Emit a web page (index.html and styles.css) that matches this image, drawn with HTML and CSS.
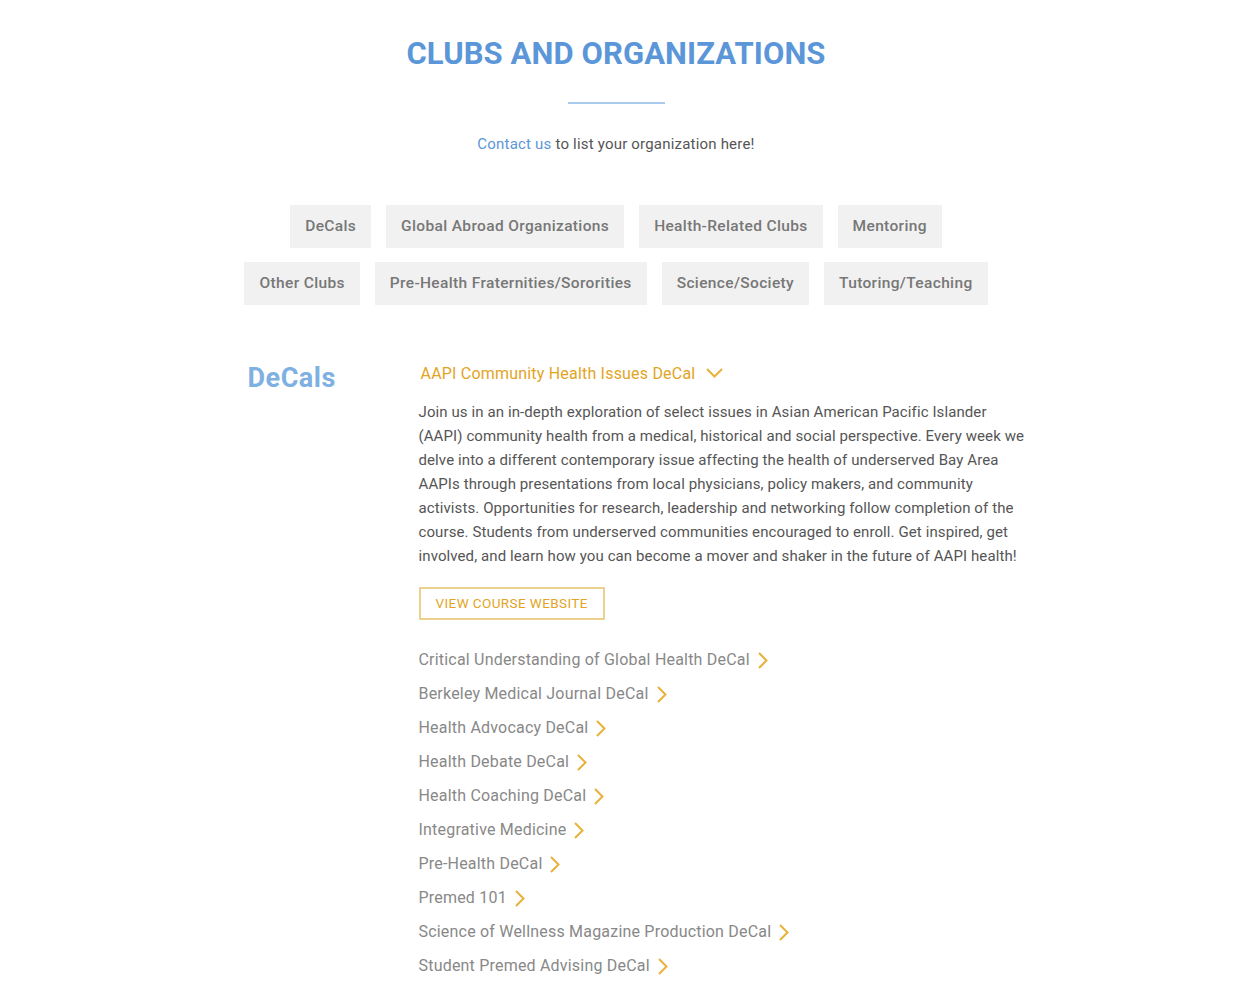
FILE: index.html
```html
<!DOCTYPE html>
<html>
<head>
<meta charset="utf-8">
<link rel="stylesheet" href="styles.css">
</head>
<body>
<div class="page">
  <header class="intro">
    <h1 class="title">CLUBS AND ORGANIZATIONS</h1>
    <div class="rule"></div>
    <p class="lead"><a class="lead-link" href="#">Contact us</a> to list your organization here!</p>
  </header>

  <nav class="filters">
    <div class="filter-row">
      <span class="filter">DeCals</span>
      <span class="filter">Global Abroad Organizations</span>
      <span class="filter">Health-Related Clubs</span>
      <span class="filter">Mentoring</span>
    </div>
    <div class="filter-row">
      <span class="filter">Other Clubs</span>
      <span class="filter">Pre-Health Fraternities/Sororities</span>
      <span class="filter">Science/Society</span>
      <span class="filter">Tutoring/Teaching</span>
    </div>
  </nav>

  <section class="group">
    <h2 class="group-title">DeCals</h2>
    <div class="group-body">
      <div class="item open">
        <div class="item-head">AAPI Community Health Issues DeCal
          <svg class="chev-down" width="17" height="10" viewBox="0 0 17 10"><path d="M1 1 L8.5 8.5 L16 1" fill="none" stroke="#e8b23a" stroke-width="2"/></svg>
        </div>
        <p class="item-text">Join us in an in-depth exploration of select issues in Asian American Pacific Islander (AAPI) community health from a medical, historical and social perspective. Every week we delve into a different contemporary issue affecting the health of underserved Bay Area AAPIs through presentations from local physicians, policy makers, and community activists. Opportunities for research, leadership and networking follow completion of the course. Students from underserved communities encouraged to enroll. Get inspired, get involved, and learn how you can become a mover and shaker in the future of AAPI health!</p>
        <a class="course-btn" href="#">VIEW COURSE WEBSITE</a>
      </div>
      <ul class="list">
        <li class="list-item">Critical Understanding of Global Health DeCal<svg class="chev" width="10" height="17" viewBox="0 0 10 17"><path d="M1 1 L8.5 8.5 L1 16" fill="none" stroke="#e8b23a" stroke-width="2"/></svg></li>
        <li class="list-item">Berkeley Medical Journal DeCal<svg class="chev" width="10" height="17" viewBox="0 0 10 17"><path d="M1 1 L8.5 8.5 L1 16" fill="none" stroke="#e8b23a" stroke-width="2"/></svg></li>
        <li class="list-item">Health Advocacy DeCal<svg class="chev" width="10" height="17" viewBox="0 0 10 17"><path d="M1 1 L8.5 8.5 L1 16" fill="none" stroke="#e8b23a" stroke-width="2"/></svg></li>
        <li class="list-item">Health Debate DeCal<svg class="chev" width="10" height="17" viewBox="0 0 10 17"><path d="M1 1 L8.5 8.5 L1 16" fill="none" stroke="#e8b23a" stroke-width="2"/></svg></li>
        <li class="list-item">Health Coaching DeCal<svg class="chev" width="10" height="17" viewBox="0 0 10 17"><path d="M1 1 L8.5 8.5 L1 16" fill="none" stroke="#e8b23a" stroke-width="2"/></svg></li>
        <li class="list-item">Integrative Medicine<svg class="chev" width="10" height="17" viewBox="0 0 10 17"><path d="M1 1 L8.5 8.5 L1 16" fill="none" stroke="#e8b23a" stroke-width="2"/></svg></li>
        <li class="list-item">Pre-Health DeCal<svg class="chev" width="10" height="17" viewBox="0 0 10 17"><path d="M1 1 L8.5 8.5 L1 16" fill="none" stroke="#e8b23a" stroke-width="2"/></svg></li>
        <li class="list-item">Premed 101<svg class="chev" width="10" height="17" viewBox="0 0 10 17"><path d="M1 1 L8.5 8.5 L1 16" fill="none" stroke="#e8b23a" stroke-width="2"/></svg></li>
        <li class="list-item">Science of Wellness Magazine Production DeCal<svg class="chev" width="10" height="17" viewBox="0 0 10 17"><path d="M1 1 L8.5 8.5 L1 16" fill="none" stroke="#e8b23a" stroke-width="2"/></svg></li>
        <li class="list-item">Student Premed Advising DeCal<svg class="chev" width="10" height="17" viewBox="0 0 10 17"><path d="M1 1 L8.5 8.5 L1 16" fill="none" stroke="#e8b23a" stroke-width="2"/></svg></li>
      </ul>
    </div>
  </section>
</div>
</body>
</html>
```

FILE: styles.css
```css
html, body {
  margin: 0;
  padding: 0;
  background: #ffffff;
}
body {
  font-family: Roboto, "Liberation Sans", sans-serif;
  color: #555555;
}
.page {
  width: 747px;
  margin: 0 auto;
  position: relative;
  left: -7px;
}
.intro {
  display: flex;
  flex-direction: column;
  align-items: center;
  padding-top: 34px;
}
.title {
  margin: 0;
  font-size: 31px;
  line-height: 40px;
  font-weight: 700;
  letter-spacing: 0.1px;
  color: #5b96d8;
}
.rule {
  width: 97px;
  height: 2px;
  background: #a8cbee;
  margin-top: 28px;
}
.lead {
  margin: 30px 0 0;
  font-size: 15px;
  line-height: 20px;
  color: #555;
  letter-spacing: 0.2px;
}
.lead-link {
  color: #5b96d8;
  text-decoration: none;
}
.filters {
  display: flex;
  flex-direction: column;
  align-items: center;
  gap: 14px;
  margin-top: 51px;
}
.filter-row {
  display: flex;
  gap: 15px;
}
.filter {
  background: #f1f1f1;
  color: #777777;
  font-size: 15.5px;
  font-weight: 500;
  line-height: 43px;
  height: 43px;
  padding: 0 15px;
  letter-spacing: 0.35px;
}
.group {
  display: flex;
  margin-top: 53px;
  padding-left: 5px;
}
.group-title {
  margin: 0;
  width: 171px;
  flex: none;
  font-size: 27px;
  line-height: 40px;
  font-weight: 700;
  color: #7eb0e2;
  letter-spacing: 0.5px;
}
.group-body {
  width: 612px;
  flex: none;
  padding-top: 4px;
}
.item-head {
  display: flex;
  align-items: center;
  gap: 10px;
  margin-left: 2px;
  font-size: 16px;
  line-height: 24px;
  color: #e3a41f;
  letter-spacing: 0.2px;
}
.chev-down {
  margin-left: 1px;
  margin-top: -3px;
}
.item-text {
  margin: 14px 0 0;
  font-size: 15px;
  line-height: 24px;
  color: #555;
  letter-spacing: 0.1px;
}
.course-btn {
  display: inline-block;
  margin-top: 19px;
  border: 2px solid #ecd08d;
  color: #e3a41f;
  text-decoration: none;
  font-size: 13.5px;
  line-height: 29px;
  padding: 0 15px;
  letter-spacing: 0.4px;
}
.list {
  list-style: none;
  margin: 28px 0 0;
  padding: 0;
  display: flex;
  flex-direction: column;
  gap: 10px;
}
.list-item {
  display: flex;
  align-items: center;
  gap: 8px;
  font-size: 16px;
  line-height: 24px;
  color: #888888;
  letter-spacing: 0.2px;
}
```
